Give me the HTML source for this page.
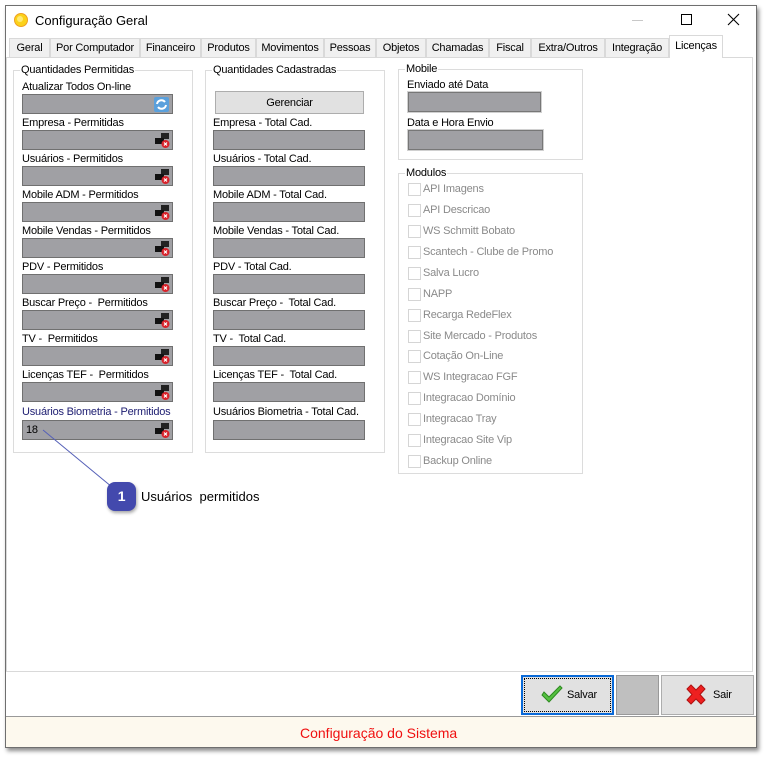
<!DOCTYPE html>
<html><head><meta charset="utf-8"><style>
*{box-sizing:border-box;margin:0;padding:0}
body{width:767px;height:757px;background:#fff;font-family:"Liberation Sans",sans-serif;font-size:11px;letter-spacing:-0.2px;color:#000;position:relative;overflow:hidden}
.a{position:absolute}
.win{left:5px;top:5px;width:752px;height:743px;border:1px solid #6f6f6f;box-shadow:2px 3px 4px rgba(0,0,0,.45);background:#fff}
.tab{position:absolute;top:38px;height:19px;background:#f0f0f0;border:1px solid #d9d9d9;border-bottom:none;text-align:center;line-height:18px;font-size:11px}
.grp{position:absolute;border:1px solid #dcdcdc}
.gt{position:absolute;top:-7px;left:6px;background:#fff;padding:0 1px;line-height:13px}
.lb{position:absolute;line-height:12px;white-space:nowrap}
.bx{position:absolute;width:151px;height:20px;background:#a0a0a4;border:1px solid #707070}
.ic{position:absolute;right:2px;top:2px;width:17px;height:15px}
.cb{position:absolute;left:408px;width:13px;height:13px;border:1px solid #d5d5d5;background:#fff}
.ct{position:absolute;left:423px;color:#8a8a8a;line-height:13px}
</style></head><body>
<div class="a win"></div>
<svg class="a" style="left:13px;top:12px" width="16" height="16"><circle cx="8" cy="8" r="6.5" fill="#fbd21a" stroke="#f0a020" stroke-width="1"/><circle cx="7" cy="7" r="3" fill="#fff3a0" opacity=".7"/></svg>
<div class="a" style="left:35px;top:13px;font-size:13px;letter-spacing:0">Configuração Geral</div>
<div class="a" style="left:632px;top:20px;width:11px;height:1px;background:#c8c8c8"></div>
<div class="a" style="left:681px;top:14px;width:11px;height:11px;border:1px solid #000"></div>
<svg class="a" style="left:727px;top:13px" width="13" height="13"><path d="M1 1L12 12M12 1L1 12" stroke="#000" stroke-width="1.1"/></svg>
<div class="a" style="left:6px;top:36px;width:750px;height:21px;background:#fff"></div>
<div class="tab" style="left:9px;width:41px">Geral</div>
<div class="tab" style="left:50px;width:90px">Por Computador</div>
<div class="tab" style="left:140px;width:61px">Financeiro</div>
<div class="tab" style="left:201px;width:55px">Produtos</div>
<div class="tab" style="left:256px;width:68px">Movimentos</div>
<div class="tab" style="left:324px;width:52px">Pessoas</div>
<div class="tab" style="left:376px;width:50px">Objetos</div>
<div class="tab" style="left:426px;width:63px">Chamadas</div>
<div class="tab" style="left:489px;width:42px">Fiscal</div>
<div class="tab" style="left:531px;width:74px">Extra/Outros</div>
<div class="tab" style="left:605px;width:64px">Integração</div>
<div class="a" style="left:6px;top:57px;width:747px;height:615px;border:1px solid #d9d9d9;background:#fff"></div>
<div class="tab" style="left:669px;top:35px;width:54px;height:23px;background:#fff;line-height:20px;z-index:2">Licenças</div>

<div class="grp" style="left:13px;top:70px;width:180px;height:383px"><div class="gt">Quantidades Permitidas</div></div>
<div class="lb" style="left:22px;top:81px">Atualizar Todos On-line</div>
<div class="bx" style="left:22px;top:94px"><svg class="ic" viewBox="0 0 17 15"><rect x="1" y="0" width="15" height="15" rx="2" fill="#5aa0dc"/><path d="M4 7a4.5 4.5 0 0 1 8-2M13 8a4.5 4.5 0 0 1-8 2" stroke="#fff" stroke-width="2" fill="none"/></svg></div>
<div class="lb" style="left:22px;top:117px">Empresa - Permitidas</div>
<div class="lb" style="left:22px;top:153px">Usuários - Permitidos</div>
<div class="lb" style="left:22px;top:189px">Mobile ADM - Permitidos</div>
<div class="lb" style="left:22px;top:225px">Mobile Vendas - Permitidos</div>
<div class="lb" style="left:22px;top:261px">PDV - Permitidos</div>
<div class="lb" style="left:22px;top:297px">Buscar Preço -&nbsp; Permitidos</div>
<div class="lb" style="left:22px;top:333px">TV -&nbsp; Permitidos</div>
<div class="lb" style="left:22px;top:369px">Licenças TEF -&nbsp; Permitidos</div>
<div class="lb" style="left:22px;top:406px;color:#1c1c70">Usuários Biometria - Permitidos</div>
<div class="bx" style="left:22px;top:130px"><svg class="ic" viewBox="0 0 17 15"><rect x="8" y="0" width="8" height="6" fill="#222"/><rect x="2" y="5" width="9" height="6" fill="#111"/><circle cx="12.5" cy="11" r="4" fill="#d8222a"/><path d="M11 9.5l3 3M14 9.5l-3 3" stroke="#fff" stroke-width="1.2"/></svg></div>
<div class="bx" style="left:22px;top:166px"><svg class="ic" viewBox="0 0 17 15"><rect x="8" y="0" width="8" height="6" fill="#222"/><rect x="2" y="5" width="9" height="6" fill="#111"/><circle cx="12.5" cy="11" r="4" fill="#d8222a"/><path d="M11 9.5l3 3M14 9.5l-3 3" stroke="#fff" stroke-width="1.2"/></svg></div>
<div class="bx" style="left:22px;top:202px"><svg class="ic" viewBox="0 0 17 15"><rect x="8" y="0" width="8" height="6" fill="#222"/><rect x="2" y="5" width="9" height="6" fill="#111"/><circle cx="12.5" cy="11" r="4" fill="#d8222a"/><path d="M11 9.5l3 3M14 9.5l-3 3" stroke="#fff" stroke-width="1.2"/></svg></div>
<div class="bx" style="left:22px;top:238px"><svg class="ic" viewBox="0 0 17 15"><rect x="8" y="0" width="8" height="6" fill="#222"/><rect x="2" y="5" width="9" height="6" fill="#111"/><circle cx="12.5" cy="11" r="4" fill="#d8222a"/><path d="M11 9.5l3 3M14 9.5l-3 3" stroke="#fff" stroke-width="1.2"/></svg></div>
<div class="bx" style="left:22px;top:274px"><svg class="ic" viewBox="0 0 17 15"><rect x="8" y="0" width="8" height="6" fill="#222"/><rect x="2" y="5" width="9" height="6" fill="#111"/><circle cx="12.5" cy="11" r="4" fill="#d8222a"/><path d="M11 9.5l3 3M14 9.5l-3 3" stroke="#fff" stroke-width="1.2"/></svg></div>
<div class="bx" style="left:22px;top:310px"><svg class="ic" viewBox="0 0 17 15"><rect x="8" y="0" width="8" height="6" fill="#222"/><rect x="2" y="5" width="9" height="6" fill="#111"/><circle cx="12.5" cy="11" r="4" fill="#d8222a"/><path d="M11 9.5l3 3M14 9.5l-3 3" stroke="#fff" stroke-width="1.2"/></svg></div>
<div class="bx" style="left:22px;top:346px"><svg class="ic" viewBox="0 0 17 15"><rect x="8" y="0" width="8" height="6" fill="#222"/><rect x="2" y="5" width="9" height="6" fill="#111"/><circle cx="12.5" cy="11" r="4" fill="#d8222a"/><path d="M11 9.5l3 3M14 9.5l-3 3" stroke="#fff" stroke-width="1.2"/></svg></div>
<div class="bx" style="left:22px;top:382px"><svg class="ic" viewBox="0 0 17 15"><rect x="8" y="0" width="8" height="6" fill="#222"/><rect x="2" y="5" width="9" height="6" fill="#111"/><circle cx="12.5" cy="11" r="4" fill="#d8222a"/><path d="M11 9.5l3 3M14 9.5l-3 3" stroke="#fff" stroke-width="1.2"/></svg></div>
<div class="bx" style="left:22px;top:420px"><span style="position:absolute;left:3px;top:3px">18</span><svg class="ic" viewBox="0 0 17 15"><rect x="8" y="0" width="8" height="6" fill="#222"/><rect x="2" y="5" width="9" height="6" fill="#111"/><circle cx="12.5" cy="11" r="4" fill="#d8222a"/><path d="M11 9.5l3 3M14 9.5l-3 3" stroke="#fff" stroke-width="1.2"/></svg></div>

<div class="grp" style="left:205px;top:70px;width:180px;height:383px"><div class="gt">Quantidades Cadastradas</div></div>
<div class="a" style="left:215px;top:91px;width:149px;height:23px;background:#e1e1e1;border:1px solid #adadad;text-align:center;line-height:23px">Gerenciar</div>
<div class="lb" style="left:213px;top:117px">Empresa - Total Cad.</div>
<div class="lb" style="left:213px;top:153px">Usuários - Total Cad.</div>
<div class="lb" style="left:213px;top:189px">Mobile ADM - Total Cad.</div>
<div class="lb" style="left:213px;top:225px">Mobile Vendas - Total Cad.</div>
<div class="lb" style="left:213px;top:261px">PDV - Total Cad.</div>
<div class="lb" style="left:213px;top:297px">Buscar Preço -&nbsp; Total Cad.</div>
<div class="lb" style="left:213px;top:333px">TV -&nbsp; Total Cad.</div>
<div class="lb" style="left:213px;top:369px">Licenças TEF -&nbsp; Total Cad.</div>
<div class="lb" style="left:213px;top:406px">Usuários Biometria - Total Cad.</div>
<div class="bx" style="left:213px;top:130px;width:152px"></div>
<div class="bx" style="left:213px;top:166px;width:152px"></div>
<div class="bx" style="left:213px;top:202px;width:152px"></div>
<div class="bx" style="left:213px;top:238px;width:152px"></div>
<div class="bx" style="left:213px;top:274px;width:152px"></div>
<div class="bx" style="left:213px;top:310px;width:152px"></div>
<div class="bx" style="left:213px;top:346px;width:152px"></div>
<div class="bx" style="left:213px;top:382px;width:152px"></div>
<div class="bx" style="left:213px;top:420px;width:152px"></div>

<div class="grp" style="left:398px;top:69px;width:185px;height:91px"><div class="gt">Mobile</div></div>
<div class="lb" style="left:407px;top:79px">Enviado até Data</div>
<div class="bx" style="left:408px;top:92px;width:133px;border:1px solid #777;box-shadow:0 0 0 1px #d0d0d0"></div>
<div class="lb" style="left:407px;top:117px">Data e Hora Envio</div>
<div class="bx" style="left:408px;top:130px;width:135px;border:1px solid #777;box-shadow:0 0 0 1px #d0d0d0"></div>

<div class="grp" style="left:398px;top:173px;width:185px;height:301px"><div class="gt">Modulos</div></div>
<div class="cb" style="top:183px"></div><div class="ct" style="top:183px">API Imagens</div>
<div class="cb" style="top:204px"></div><div class="ct" style="top:204px">API Descricao</div>
<div class="cb" style="top:225px"></div><div class="ct" style="top:225px">WS Schmitt Bobato</div>
<div class="cb" style="top:246px"></div><div class="ct" style="top:246px">Scantech - Clube de Promo</div>
<div class="cb" style="top:267px"></div><div class="ct" style="top:267px">Salva Lucro</div>
<div class="cb" style="top:288px"></div><div class="ct" style="top:288px">NAPP</div>
<div class="cb" style="top:309px"></div><div class="ct" style="top:309px">Recarga RedeFlex</div>
<div class="cb" style="top:330px"></div><div class="ct" style="top:330px">Site Mercado - Produtos</div>
<div class="cb" style="top:350px"></div><div class="ct" style="top:350px">Cotação On-Line</div>
<div class="cb" style="top:371px"></div><div class="ct" style="top:371px">WS Integracao FGF</div>
<div class="cb" style="top:392px"></div><div class="ct" style="top:392px">Integracao Domínio</div>
<div class="cb" style="top:413px"></div><div class="ct" style="top:413px">Integracao Tray</div>
<div class="cb" style="top:434px"></div><div class="ct" style="top:434px">Integracao Site Vip</div>
<div class="cb" style="top:455px"></div><div class="ct" style="top:455px">Backup Online</div>

<svg class="a" style="left:0;top:0" width="767" height="757"><line x1="43" y1="430" x2="112" y2="487" stroke="#5560b8" stroke-width="1"/></svg>
<div class="a" style="left:107px;top:482px;width:29px;height:29px;border-radius:8px;background:#4349ad;color:#fff;font-weight:bold;font-size:14px;text-align:center;line-height:29px;box-shadow:1px 2px 3px rgba(0,0,0,.35)">1</div>
<div class="a" style="left:141px;top:489px;font-size:13px;letter-spacing:0">Usuários&nbsp;&nbsp;permitidos</div>

<div class="a" style="left:521px;top:675px;width:93px;height:40px;background:#e1e1e1;border:2px solid #0a6ad8"><div style="position:absolute;inset:1px;border:1px dotted #000"></div>
<svg class="a" style="left:17px;top:8px" width="24" height="20"><path d="M2 10l7 7L22 3l-2-2L9 12 4 7z" fill="#55c040" stroke="#2d8a20" stroke-width="1"/></svg>
<span class="a" style="left:44px;top:12px">Salvar</span></div>
<div class="a" style="left:616px;top:675px;width:43px;height:40px;background:#bfbfbf;border:1px solid #999"></div>
<div class="a" style="left:661px;top:675px;width:93px;height:40px;background:#e1e1e1;border:1px solid #adadad">
<svg class="a" style="left:22px;top:8px" width="24" height="22"><path d="M3 5l4-4 5 5 5-5 4 4-5 5.5 5 5.5-4 4-5-5-5 5-4-4 5-5.5z" fill="#ee2020" stroke="#b01010" stroke-width="1"/></svg>
<span class="a" style="left:51px;top:13px">Sair</span></div>

<div class="a" style="left:6px;top:716px;width:750px;height:31px;background:#fdf9ee;border-top:1px solid #999"></div>
<div class="a" style="left:300px;top:725px;color:#f01010;font-size:14px;letter-spacing:0">Configuração do Sistema</div>
</body></html>
